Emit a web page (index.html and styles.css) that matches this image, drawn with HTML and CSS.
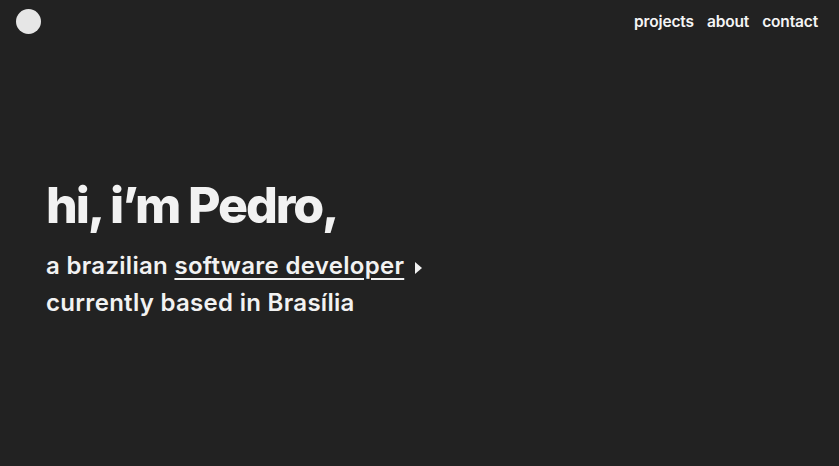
FILE: index.html
```html
<!DOCTYPE html>
<html lang="en">
<head>
<meta charset="utf-8">
<title>Pedro</title>
<link rel="stylesheet" href="styles.css">
</head>
<body>
<header class="topbar">
  <span class="logo"></span>
  <nav class="nav">
    <a href="#">projects</a>
    <a href="#">about</a>
    <a href="#">contact</a>
  </nav>
</header>
<main class="hero">
  <h1 class="title">hi, i’m Pedro,</h1>
  <p class="sub">a brazilian <a class="link" href="#">software developer</a> <span class="tri"></span><br>currently based in Brasília</p>
</main>
</body>
</html>
```
FILE: styles.css
```css
* { box-sizing: border-box; }
html, body { margin: 0; height: 100%; }
body {
  background: #222222;
  color: #f2f2f2;
  font-family: Inter, "Noto Sans", sans-serif;
}
.topbar {
  display: flex;
  justify-content: space-between;
  align-items: center;
  padding: 9px 21px 0 16px;
}
.logo {
  width: 25px;
  height: 25px;
  border-radius: 50%;
  background: #e6e6e6;
  display: block;
}
.nav {
  display: flex;
  gap: 13px;
  font-size: 15.5px;
  font-weight: 600;
  letter-spacing: -0.15px;
}
.nav a { color: #f5f5f5; text-decoration: none; }
.hero {
  padding: 141px 0 0 46px;
}
.title {
  margin: 0;
  font-size: 50px;
  font-weight: 800;
  letter-spacing: -2.1px;
  line-height: 60px;
}
.sub {
  margin: 12px 0 0;
  font-size: 24px;
  font-weight: 600;
  letter-spacing: 0.3px;
  line-height: 37px;
}
.link {
  color: inherit;
  text-decoration: underline;
  text-decoration-thickness: 2px;
  text-underline-offset: 4px;
}
.tri {
  display: inline-block;
  width: 0; height: 0;
  border-top: 6px solid transparent;
  border-bottom: 6px solid transparent;
  border-left: 7px solid #f2f2f2;
  margin-left: 4px;
  vertical-align: 0;
}
```
